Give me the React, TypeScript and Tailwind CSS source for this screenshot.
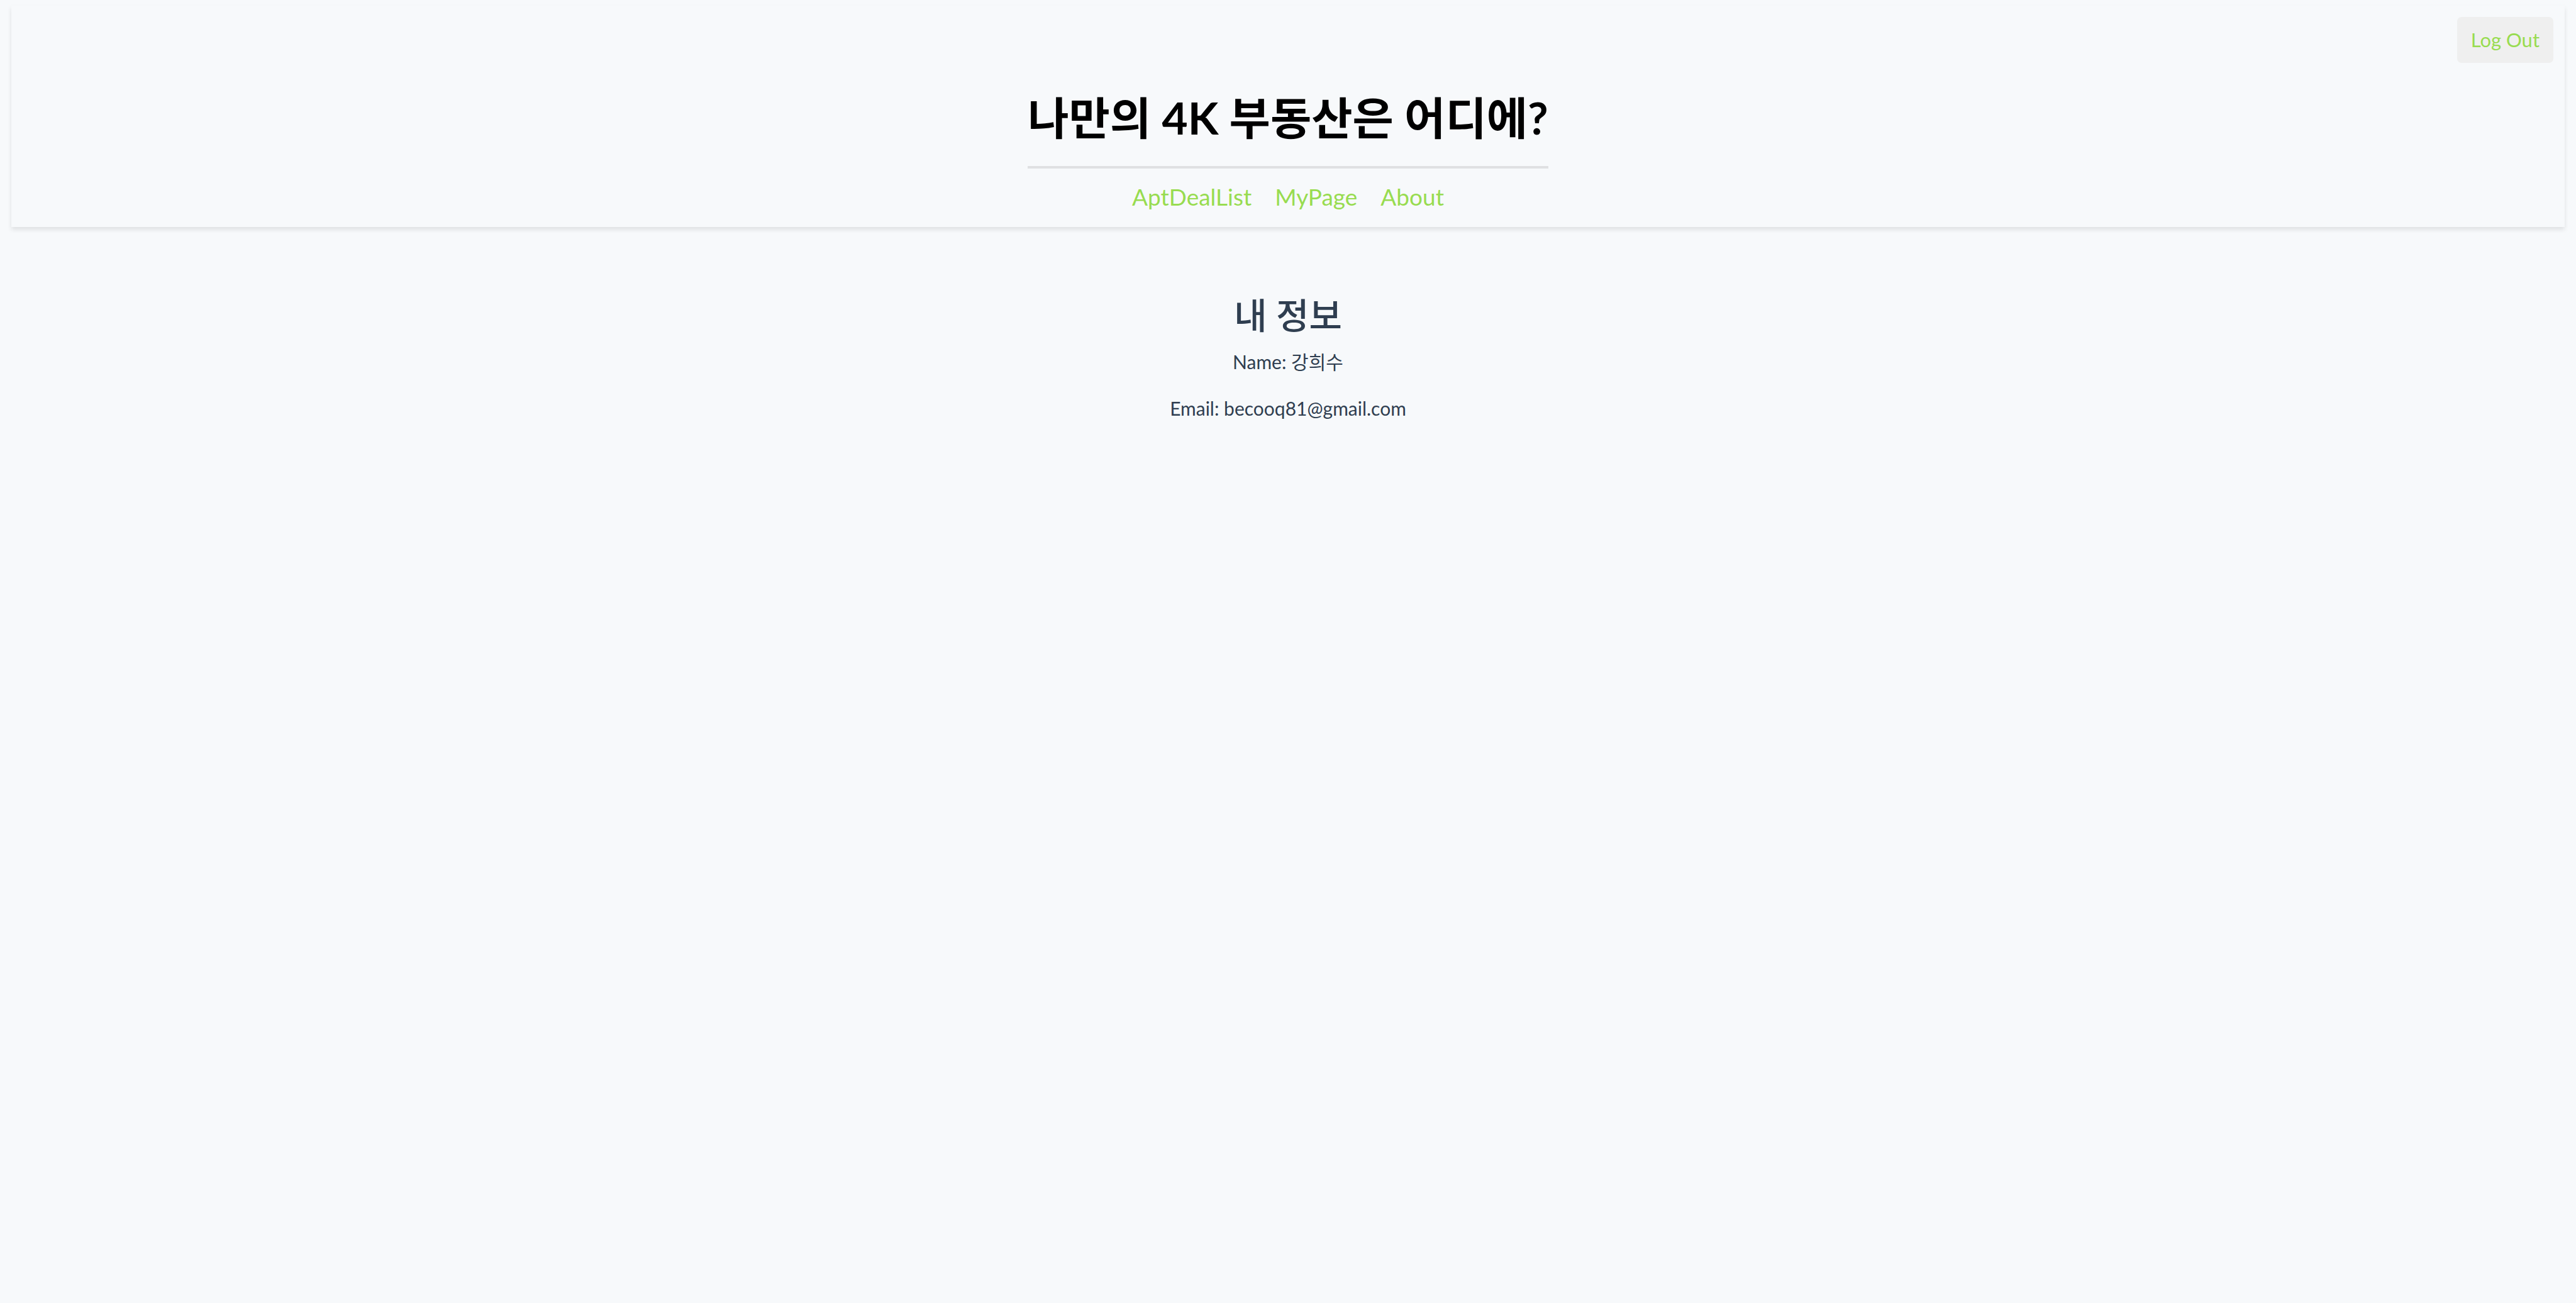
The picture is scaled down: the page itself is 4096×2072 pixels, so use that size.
const links = ["AptDealList", "MyPage", "About"];

export default function App() {
  return (
    <div className="min-h-screen bg-[#f7f9fb] px-[18px] pt-[9px] text-center font-['Lato','Noto_Sans_CJK_KR',sans-serif] text-[30px] leading-[37px] text-[#2f3e50]">
      <header className="flex flex-col items-center bg-[#f7f9fb] px-[18px] pt-[18px] pb-[24px] shadow-[0_4px_7px_rgba(0,0,0,0.1)]">
        <button
          type="button"
          className="self-end rounded-[7px] bg-[#efefef] px-[22px] py-[18px] text-[31px] text-[#98dc50]"
        >
          Log Out
        </button>
        <h1 className="mt-[34px] border-b-4 border-[#dfe0e2] pb-[24px] text-[71px] leading-[106px] font-bold text-black">
          나만의 4K 부동산은 어디에?
        </h1>
        <nav className="mt-[21px] flex gap-[37px] text-[37px] leading-[48px] text-[#98dc50]">
          {links.map((label) => (
            <a key={label} href={"#" + label}>
              {label}
            </a>
          ))}
        </nav>
      </header>
      <main className="pt-[96px]">
        <h2 className="text-[57px] leading-[88px] font-medium">내 정보</h2>
        <p className="mt-[12px]">Name: 강희수</p>
        <p className="mt-[37px]">Email: becooq81@gmail.com</p>
      </main>
    </div>
  );
}
